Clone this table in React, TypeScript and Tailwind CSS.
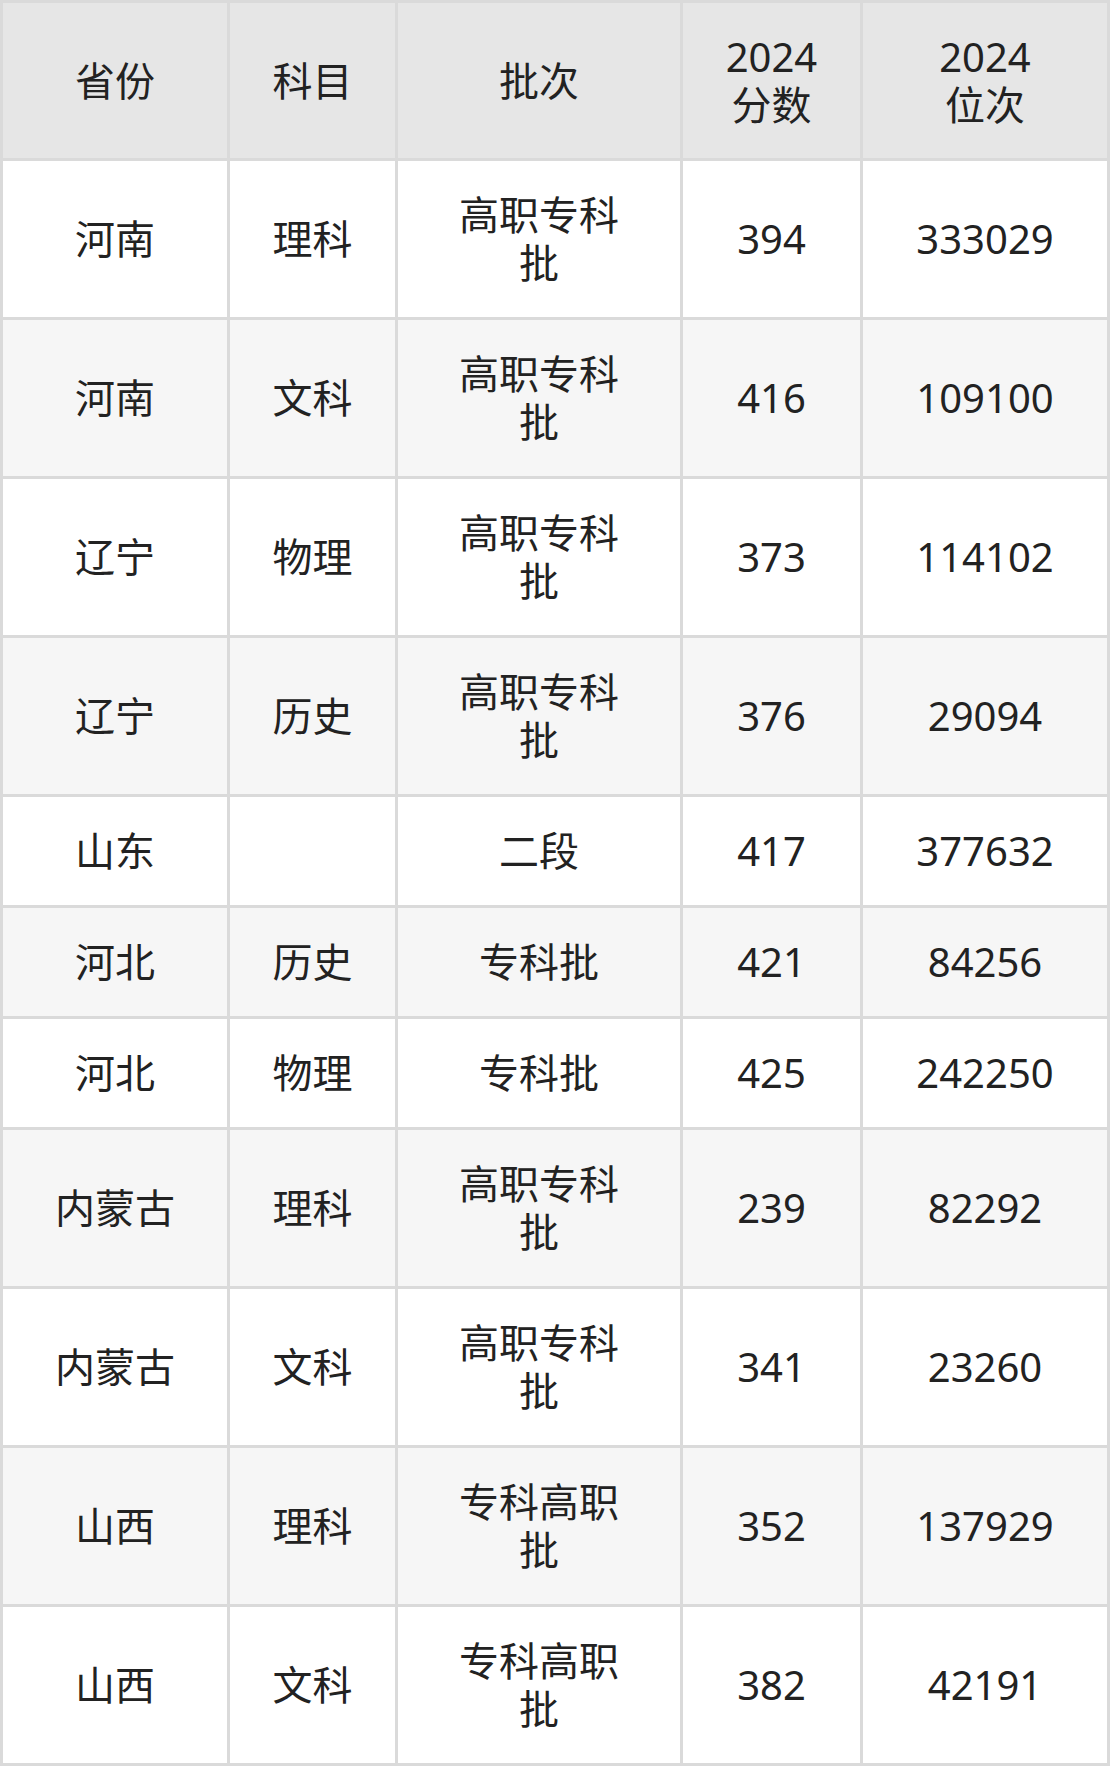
export default function App() {
  const header = [["省份"], ["科目"], ["批次"], ["2024", "分数"], ["2024", "位次"]]

  const rows = [
    { province: "河南", subject: "理科", batch: ["高职专科", "批"], score: "394", rank: "333029" },
    { province: "河南", subject: "文科", batch: ["高职专科", "批"], score: "416", rank: "109100" },
    { province: "辽宁", subject: "物理", batch: ["高职专科", "批"], score: "373", rank: "114102" },
    { province: "辽宁", subject: "历史", batch: ["高职专科", "批"], score: "376", rank: "29094" },
    { province: "山东", subject: "", batch: ["二段"], score: "417", rank: "377632" },
    { province: "河北", subject: "历史", batch: ["专科批"], score: "421", rank: "84256" },
    { province: "河北", subject: "物理", batch: ["专科批"], score: "425", rank: "242250" },
    { province: "内蒙古", subject: "理科", batch: ["高职专科", "批"], score: "239", rank: "82292" },
    { province: "内蒙古", subject: "文科", batch: ["高职专科", "批"], score: "341", rank: "23260" },
    { province: "山西", subject: "理科", batch: ["专科高职", "批"], score: "352", rank: "137929" },
    { province: "山西", subject: "文科", batch: ["专科高职", "批"], score: "382", rank: "42191" },
  ]

  return (
    <div
      className="w-[1110px] bg-[#dadada] p-[3px] text-[40px] leading-[48px] text-[#222]"
      style={{ fontFamily: '"Noto Sans", "Noto Sans CJK SC", sans-serif' }}
    >
      <div className="grid grid-cols-[224px_165px_282px_177px_244px] gap-[3px]">
        {header.map((lines, i) => (
          <div key={i} className="flex h-[155px] flex-col items-center justify-center bg-[#e6e6e6] text-center">
            {lines.map((l) => (
              <span key={l}>{l}</span>
            ))}
          </div>
        ))}

        {rows.map((row, r) => {
          const tall = row.batch.length > 1
          const bg = r % 2 === 0 ? "bg-white" : "bg-[#f6f6f6]"
          const h = tall ? "h-[156px]" : "h-[108px]"
          const cells = [[row.province], [row.subject], row.batch, [row.score], [row.rank]]
          return cells.map((lines, c) => (
            <div key={`${r}-${c}`} className={`flex flex-col items-center justify-center text-center ${bg} ${h}`}>
              {lines.map((l, k) => (
                <span key={k}>{l}</span>
              ))}
            </div>
          ))
        })}
      </div>
    </div>
  )
}
